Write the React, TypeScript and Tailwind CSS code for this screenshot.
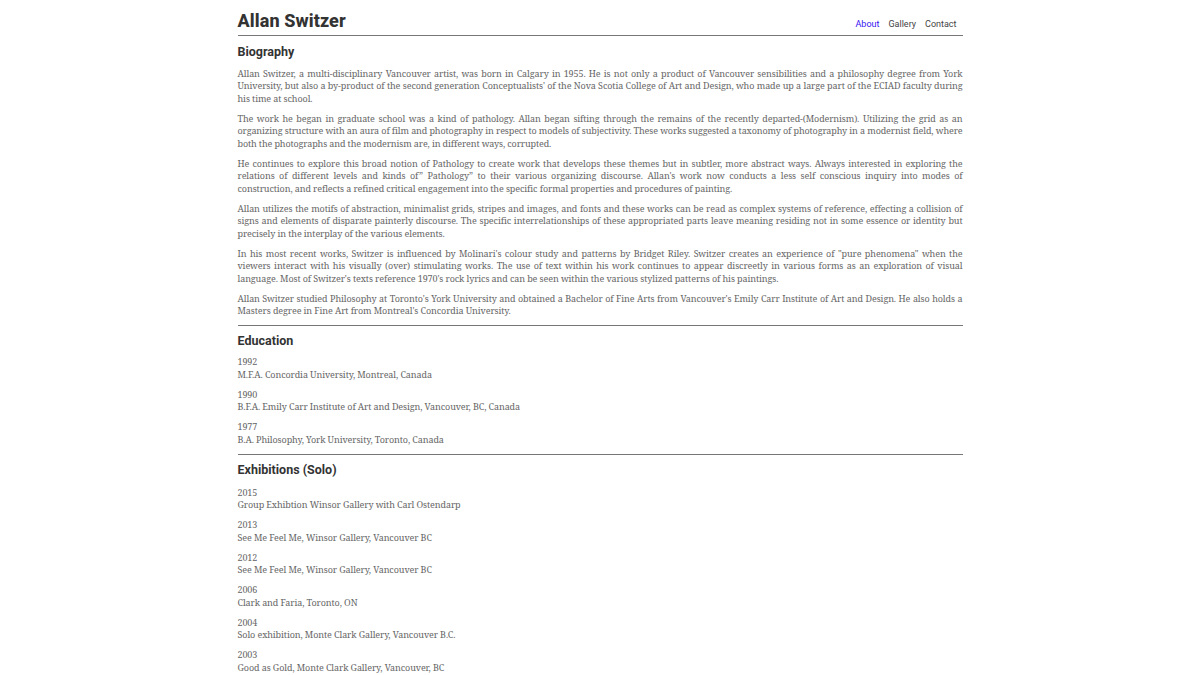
import React from "react";

// tracking per paragraph so the line breaks land where the original page has them
const bio = [
	{
		t: "tracking-[-0.1px]",
		p: "Allan Switzer, a multi-disciplinary Vancouver artist, was born in Calgary in 1955. He is not only a product of Vancouver sensibilities and a philosophy degree from York University, but also a by-product of the second generation Conceptualists' of the Nova Scotia College of Art and Design, who made up a large part of the ECIAD faculty during his time at school.",
	},
	{
		t: "tracking-[-0.12px]",
		p: "The work he began in graduate school was a kind of pathology. Allan began sifting through the remains of the recently departed-(Modernism). Utilizing the grid as an organizing structure with an aura of film and photography in respect to models of subjectivity. These works suggested a taxonomy of photography in a modernist field, where both the photographs and the modernism are, in different ways, corrupted.",
	},
	{
		t: "tracking-[-0.1px]",
		p: "He continues to explore this broad notion of Pathology to create work that develops these themes but in subtler, more abstract ways. Always interested in exploring the relations of different levels and kinds of\u201D Pathology\u201D to their various organizing discourse. Allan's work now conducts a less self conscious inquiry into modes of construction, and reflects a refined critical engagement into the specific formal properties and procedures of painting.",
	},
	{
		t: "tracking-[-0.1px]",
		p: "Allan utilizes the motifs of abstraction, minimalist grids, stripes and images, and fonts and these works can be read as complex systems of reference, effecting a collision of signs and elements of disparate painterly discourse. The specific interrelationships of these appropriated parts leave meaning residing not in some essence or identity but precisely in the interplay of the various elements.",
	},
	{
		t: "tracking-[-0.1px]",
		p: "In his most recent works, Switzer is influenced by Molinari's colour study and patterns by Bridget Riley. Switzer creates an experience of \"pure phenomena\" when the viewers interact with his visually (over) stimulating works. The use of text within his work continues to appear discreetly in various forms as an exploration of visual language. Most of Switzer's texts reference 1970's rock lyrics and can be seen within the various stylized patterns of his paintings.",
	},
	{
		t: "tracking-[-0.1px]",
		p: "Allan Switzer studied Philosophy at Toronto's York University and obtained a Bachelor of Fine Arts from Vancouver's Emily Carr Institute of Art and Design. He also holds a Masters degree in Fine Art from Montreal's Concordia University.",
	},
];

const education = [
	["1992", "M.F.A. Concordia University, Montreal, Canada"],
	["1990", "B.F.A. Emily Carr Institute of Art and Design, Vancouver, BC, Canada"],
	["1977", "B.A. Philosophy, York University, Toronto, Canada"],
];

const solo = [
	["2015", "Group Exhibtion Winsor Gallery with Carl Ostendarp"],
	["2013", "See Me Feel Me, Winsor Gallery, Vancouver BC"],
	["2012", "See Me Feel Me, Winsor Gallery, Vancouver BC"],
	["2006", "Clark and Faria, Toronto, ON"],
	["2004", "Solo exhibition, Monte Clark Gallery, Vancouver B.C."],
	["2003", "Good as Gold, Monte Clark Gallery, Vancouver, BC"],
];

const heading = "font-['Roboto',sans-serif] font-bold text-[12.5px] leading-[15px] text-[#333]";
const body = "font-['Noto_Serif',serif] text-[9px] leading-[12.5px] text-[#666]";

function Entries({ items }: { items: string[][] }) {
	return (
		<div className="flex flex-col gap-[7.5px]">
			{items.map(([year, text]) => (
				<div key={year + text} className={body + " tracking-[-0.1px]"}>
					<div>{year}</div>
					<div>{text}</div>
				</div>
			))}
		</div>
	);
}

export default function App() {
	return (
		<div className="bg-white min-h-screen w-full">
			<div className="w-[725px] mx-auto">
				<header className="flex justify-between items-baseline pt-[12px] pb-[3px] border-b border-[#777]">
					<h1 className="font-['Roboto',sans-serif] font-extrabold text-[18px] leading-[18px] text-[#333] tracking-[0.1px]">
						Allan Switzer
					</h1>
					<nav className="flex gap-[9px] pr-[6px] font-['Roboto',sans-serif] text-[9px] text-[#444]">
						<a className="text-[#3414f0]">About</a>
						<a>Gallery</a>
						<a>Contact</a>
					</nav>
				</header>

				<section className="border-b border-[#777] pb-[7.5px]">
					<h2 className={heading + " mt-[8px] mb-[9px]"}>Biography</h2>
					<div className="flex flex-col gap-[7.5px]">
						{bio.map((b, i) => (
							<p key={i} className={body + " text-justify " + b.t}>
								{b.p}
							</p>
						))}
					</div>
				</section>

				<section className="border-b border-[#777] pb-[7.5px]">
					<h2 className={heading + " mt-[7px] mb-[8px]"}>Education</h2>
					<Entries items={education} />
				</section>

				<section className="pb-[20px]">
					<h2 className={heading + " mt-[7px] mb-[10px]"}>Exhibitions (Solo)</h2>
					<Entries items={solo} />
				</section>
			</div>
		</div>
	);
}
